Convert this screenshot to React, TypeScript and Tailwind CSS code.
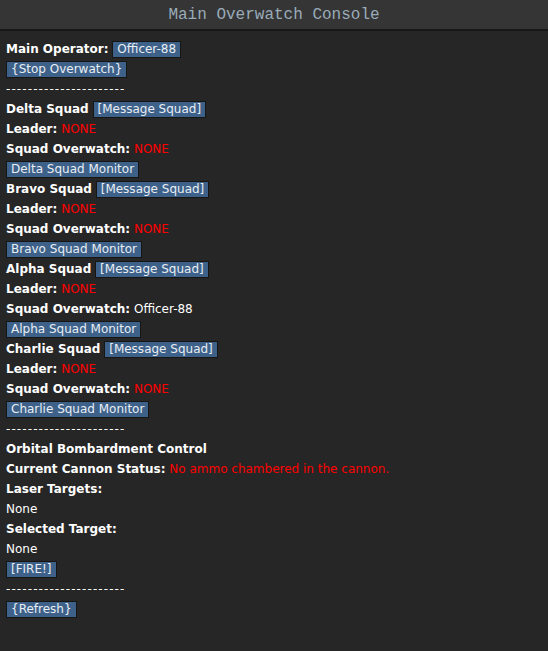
import React from "react";

const Btn = ({ children }: { children: React.ReactNode }) => (
  <span className="inline-block bg-[#3e6189] border border-[#161616] text-[#e8eef4] px-[4px] leading-[15px] align-middle">
    {children}
  </span>
);

const Red = ({ children }: { children: React.ReactNode }) => (
  <span className="text-[#ff0000]">{children}</span>
);

const Dash = () => <div className="tracking-[1.1px]">----------------------</div>;

const Squad = ({ name, overwatch }: { name: string; overwatch?: string }) => (
  <>
    <div>
      <b>{name}</b> <Btn>[Message Squad]</Btn>
    </div>
    <div>
      <b>Leader:</b> <Red>NONE</Red>
    </div>
    <div>
      <b>Squad Overwatch:</b> {overwatch ? overwatch : <Red>NONE</Red>}
    </div>
    <div>
      <Btn>{name} Monitor</Btn>
    </div>
  </>
);

export default function App() {
  return (
    <div className="w-[548px] h-[651px] bg-[#262626] flex flex-col overflow-hidden">
      <div className="h-[31px] bg-[#353535] border-b-2 border-[#181818] flex items-center justify-center text-[16px] text-[#9aabb9] font-['Liberation_Mono',monospace]">
        Main Overwatch Console
      </div>
      <div className="px-[6px] pt-[8px] text-[12px] leading-[20px] text-white font-['DejaVu_Sans',sans-serif]">
        <div>
          <b>Main Operator:</b> <Btn>Officer-88</Btn>
        </div>
        <div>
          <Btn>{"{Stop Overwatch}"}</Btn>
        </div>
        <Dash />
        <Squad name="Delta Squad" />
        <Squad name="Bravo Squad" />
        <Squad name="Alpha Squad" overwatch="Officer-88" />
        <Squad name="Charlie Squad" />
        <Dash />
        <div>
          <b>Orbital Bombardment Control</b>
        </div>
        <div>
          <b>Current Cannon Status:</b> <Red>No ammo chambered in the cannon.</Red>
        </div>
        <div>
          <b>Laser Targets:</b>
        </div>
        <div>None</div>
        <div>
          <b>Selected Target:</b>
        </div>
        <div>None</div>
        <div>
          <Btn>[FIRE!]</Btn>
        </div>
        <Dash />
        <div>
          <Btn>{"{Refresh}"}</Btn>
        </div>
      </div>
    </div>
  );
}
